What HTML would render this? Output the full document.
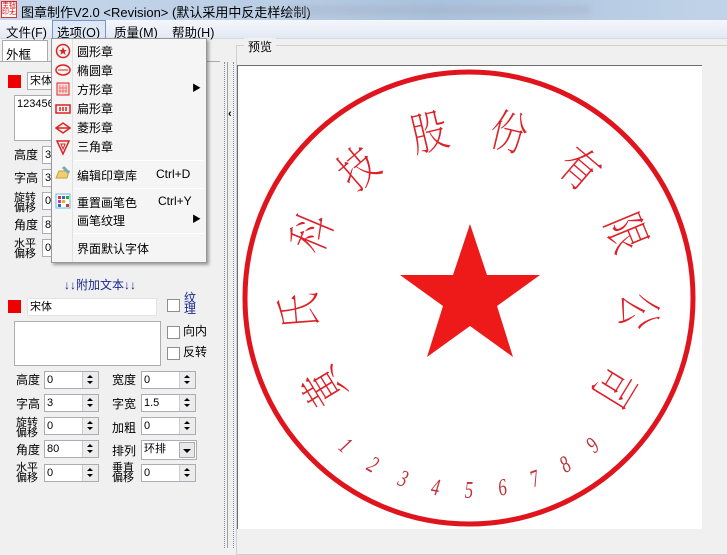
<!DOCTYPE html>
<html><head><meta charset="utf-8"><style>
*{margin:0;padding:0;box-sizing:border-box}
body{width:727px;height:548px;overflow:hidden;background:#f0f0f0;font-family:"Liberation Sans","Noto Sans CJK SC",sans-serif;font-size:12px;color:#000;position:relative}
.a{position:absolute}
.title{left:0;top:0;width:727px;height:20px;background:linear-gradient(90deg,#c5d6ea,#b9cde4 40%,#aac3de 60%,#c1d3e8);}
.menu{left:0;top:20px;width:727px;height:19px;background:linear-gradient(#f4f6fb,#e3e9f4);border-bottom:1px solid #d5dbe6}
.mi{top:22px;font-size:12.5px}
.inp{background:#fff;border:1px solid #abadb3;height:18px;font-size:11px;padding-left:2px;line-height:16px}
.spin{position:absolute;right:0;top:0;width:16px;height:16px;background:#ececec;border-left:1px solid #ccc}
.spin:before{content:"";position:absolute;left:4px;top:3px;border:3px solid transparent;border-bottom:3px solid #000;border-top:0}
.spin:after{content:"";position:absolute;left:4px;top:9px;border:3px solid transparent;border-top:3px solid #000;border-bottom:0}
.lb{font-size:12px;line-height:13px}
.lb2{font-size:11px;line-height:10px}
.cb{width:13px;height:13px;background:#fff;border:1px solid #8e8f8f}
.dd{left:51px;top:38px;width:156px;height:225px;background:#f5f5f5;border:1px solid #979797;box-shadow:2px 2px 3px rgba(0,0,0,.35)}
.dd div{position:absolute;font-size:12px}
.sep{height:1px;background:#d7d7d7;border-bottom:1px solid #fff;left:22px;width:130px}
</style></head><body>
<div class="a title"></div>
<div class="a" style="left:1px;top:1px;width:16px;height:17px;background:#fff;border:1px solid #d33;font-size:7px;line-height:7px;color:#d00;text-align:center">圭钮<br>印无</div>
<div class="a" style="left:21px;top:2px;font-size:13px">图章制作V2.0 &lt;Revision&gt; (默认采用中反走样绘制)</div>
<div class="a" style="left:290px;top:5px;width:300px;height:10px;background:rgba(160,170,190,.35);filter:blur(3px)"></div>
<div class="a menu"></div>
<div class="a mi" style="left:6px">文件(F)</div>
<div class="a" style="left:52px;top:20px;width:54px;height:19px;border:1px solid #7a95c0;background:#dde7f5"></div>
<div class="a mi" style="left:57px">选项(O)</div>
<div class="a mi" style="left:114px">质量(M)</div>
<div class="a mi" style="left:172px">帮助(H)</div>

<div class="a" style="left:2px;top:40px;width:46px;height:22px;border:1px solid #aaa;border-bottom:0;background:#fff"></div>
<div class="a" style="left:6px;top:44px;font-size:12.5px">外框</div>
<div class="a" style="left:0;top:61px;width:220px;height:1px;background:#aaa"></div>
<div class="a" style="left:8px;top:75px;width:13px;height:13px;background:#e00"></div>
<div class="a inp" style="left:27px;top:72px;width:130px">宋体</div>
<div class="a inp" style="left:14px;top:95px;width:150px;height:46px;font-size:11px">123456</div>
<div class="a lb" style="left:14px;top:149px">高度</div><div class="a inp" style="left:42px;top:146px;width:54px">3</div>
<div class="a lb" style="left:14px;top:172px">字高</div><div class="a inp" style="left:42px;top:169px;width:54px">3</div>
<div class="a lb2" style="left:14px;top:193px">旋转<br>偏移</div><div class="a inp" style="left:42px;top:192px;width:54px">0</div>
<div class="a lb" style="left:14px;top:219px">角度</div><div class="a inp" style="left:42px;top:216px;width:54px">8</div>
<div class="a lb2" style="left:14px;top:239px">水平<br>偏移</div><div class="a inp" style="left:42px;top:239px;width:54px">0</div>
<div class="a" style="left:64px;top:276px;font-size:12px;color:#1a2890">↓↓附加文本↓↓</div>
<div class="a" style="left:8px;top:300px;width:13px;height:13px;background:#e00"></div>
<div class="a inp" style="left:27px;top:298px;width:130px;border-color:#e3e3e3">宋体</div>
<div class="a cb" style="left:167px;top:299px"></div>
<div class="a" style="left:184px;top:293px;font-size:12px;line-height:11px;color:#1a2890">纹<br>理</div>
<div class="a inp" style="left:14px;top:321px;width:147px;height:45px"></div>
<div class="a cb" style="left:167px;top:326px"></div><div class="a lb" style="left:183px;top:325px">向内</div>
<div class="a cb" style="left:167px;top:347px"></div><div class="a lb" style="left:183px;top:346px">反转</div>

<div class="a lb" style="left:16px;top:374px">高度</div><div class="a inp" style="left:44px;top:371px;width:55px">0<span class="spin"></span></div>
<div class="a lb" style="left:112px;top:374px">宽度</div><div class="a inp" style="left:141px;top:371px;width:55px">0<span class="spin"></span></div>
<div class="a lb" style="left:16px;top:398px">字高</div><div class="a inp" style="left:44px;top:394px;width:55px">3<span class="spin"></span></div>
<div class="a lb" style="left:112px;top:398px">字宽</div><div class="a inp" style="left:141px;top:394px;width:55px">1.5<span class="spin"></span></div>
<div class="a lb2" style="left:16px;top:418px">旋转<br>偏移</div><div class="a inp" style="left:44px;top:417px;width:55px">0<span class="spin"></span></div>
<div class="a lb" style="left:112px;top:422px">加粗</div><div class="a inp" style="left:141px;top:417px;width:55px">0<span class="spin"></span></div>
<div class="a lb" style="left:16px;top:444px">角度</div><div class="a inp" style="left:44px;top:440px;width:55px">80<span class="spin"></span></div>
<div class="a lb" style="left:112px;top:445px">排列</div><div class="a inp" style="left:141px;top:440px;width:56px;height:20px">环排<span class="a" style="right:1px;top:1px;width:16px;height:16px;background:#e8e8e8;border:1px solid #aaa"></span><span class="a" style="right:5px;top:8px;border:4px solid transparent;border-top:4px solid #000;border-bottom:0"></span></div>
<div class="a lb2" style="left:16px;top:463px">水平<br>偏移</div><div class="a inp" style="left:44px;top:464px;width:55px">0<span class="spin"></span></div>
<div class="a lb2" style="left:112px;top:463px">垂直<br>偏移</div><div class="a inp" style="left:141px;top:464px;width:55px">0<span class="spin"></span></div>

<div class="a" style="left:224px;top:62px;width:1px;height:486px;border-left:1px dotted #7a8aa8"></div>
<div class="a" style="left:227px;top:62px;width:1px;height:486px;background:#a0a0a0"></div>
<div class="a" style="left:228px;top:108px;font-size:11px;font-weight:bold">‹</div>
<div class="a" style="left:233px;top:62px;width:1px;height:486px;border-left:1px dotted #7a8aa8"></div>

<div class="a" style="left:236px;top:45px;width:500px;height:510px;border:1px solid #d0d0d0"></div>
<div class="a" style="left:244px;top:38px;padding:0 4px;background:#f0f0f0;font-size:12px">预览</div>
<div class="a" style="left:237px;top:65px;width:465px;height:464px;background:#fff;border-top:1px solid #6d6d6d;border-left:1px solid #6d6d6d"></div>

<svg class="a" style="left:0;top:0" width="727" height="548">
<defs><clipPath id="c"><rect x="238" y="66" width="464" height="463"/></clipPath></defs>
<g clip-path="url(#c)">
<ellipse cx="469" cy="298" rx="224" ry="226" fill="none" stroke="#e0141c" stroke-width="5"/>
<polygon fill="#ee1a1a" points="470,224 487,275 540,275 497,306 513,357 470,326 427,357 443,306 400,275 453,275"/>
<g fill="#dd2028" font-family="'Noto Serif CJK SC',serif" font-size="46" font-weight="200" text-anchor="middle">
<text transform="translate(469,298) rotate(-121.5) translate(0,-170) scale(0.8,1)" y="16">黄</text>
<text transform="translate(469,298) rotate(-94.5) translate(0,-170) scale(0.8,1)" y="16">氏</text>
<text transform="translate(469,298) rotate(-67.5) translate(0,-170) scale(0.8,1)" y="16">科</text>
<text transform="translate(469,298) rotate(-40.5) translate(0,-170) scale(0.8,1)" y="16">技</text>
<text transform="translate(469,298) rotate(-13.5) translate(0,-170) scale(0.8,1)" y="16">股</text>
<text transform="translate(469,298) rotate(13.5) translate(0,-170) scale(0.8,1)" y="16">份</text>
<text transform="translate(469,298) rotate(40.5) translate(0,-170) scale(0.8,1)" y="16">有</text>
<text transform="translate(469,298) rotate(67.5) translate(0,-170) scale(0.8,1)" y="16">限</text>
<text transform="translate(469,298) rotate(94.5) translate(0,-170) scale(0.8,1)" y="16">公</text>
<text transform="translate(469,298) rotate(121.5) translate(0,-170) scale(0.8,1)" y="16">司</text>
</g>
<g fill="#c0303a" font-family="'Liberation Serif',serif" font-style="italic" font-size="24" text-anchor="middle">
<text transform="translate(469,298) rotate(40) translate(0,200) scale(0.7,1)">1</text>
<text transform="translate(469,298) rotate(30) translate(0,200) scale(0.7,1)">2</text>
<text transform="translate(469,298) rotate(20) translate(0,200) scale(0.7,1)">3</text>
<text transform="translate(469,298) rotate(10) translate(0,200) scale(0.7,1)">4</text>
<text transform="translate(469,298) rotate(0) translate(0,200) scale(0.7,1)">5</text>
<text transform="translate(469,298) rotate(-10) translate(0,200) scale(0.7,1)">6</text>
<text transform="translate(469,298) rotate(-20) translate(0,200) scale(0.7,1)">7</text>
<text transform="translate(469,298) rotate(-30) translate(0,200) scale(0.7,1)">8</text>
<text transform="translate(469,298) rotate(-40) translate(0,200) scale(0.7,1)">9</text>
</g>
</g>
</svg>

<div class="a dd">
<div style="left:20px;top:0;width:1px;height:223px;background:#e2e2e2"></div>
<svg style="position:absolute;left:3px;top:4px" width="16" height="120">
<circle cx="8" cy="8" r="6.5" fill="none" stroke="#d22" stroke-width="1.5"/><polygon fill="#d22" points="8,4 9.2,7 12,7 9.7,8.8 10.6,12 8,10 5.4,12 6.3,8.8 4,7 6.8,7"/>
<ellipse cx="8" cy="27" rx="7" ry="5" fill="none" stroke="#d22" stroke-width="1.5"/><line x1="3" y1="27" x2="13" y2="27" stroke="#d22"/>
<rect x="2" y="40" width="12" height="12" fill="#fdd" stroke="#d22"/><path d="M5 42v8M8 42v8M11 42v8M4 45h8M4 48h8" stroke="#e55" stroke-width=".7"/>
<rect x="1" y="62" width="14" height="8" fill="none" stroke="#d22" stroke-width="1.5"/><path d="M5 64v4M8 64v4M11 64v4" stroke="#d22" stroke-width="1.5"/>
<path d="M1 85 L8 80 L15 85 L8 90Z" fill="none" stroke="#d22" stroke-width="1.5"/><line x1="2" y1="85" x2="14" y2="85" stroke="#d22" stroke-width="1.5"/>
<path d="M2 98 L14 98 L8 111Z" fill="none" stroke="#d22" stroke-width="1.5"/><path d="M6 101 L10 101 L8 106Z" fill="none" stroke="#d22"/>
</svg>
<div style="left:25px;top:4px">圆形章</div>
<div style="left:25px;top:23px">椭圆章</div>
<div style="left:25px;top:42px">方形章</div><div style="left:140px;top:42px;font-size:9px">▶</div>
<div style="left:25px;top:61px">扁形章</div>
<div style="left:25px;top:80px">菱形章</div>
<div style="left:25px;top:99px">三角章</div>
<div class="sep" style="top:121px"></div>
<svg style="position:absolute;left:3px;top:126px" width="16" height="16"><path d="M1 13 L4 6 L14 6 L12 13Z" fill="#f0d070" stroke="#c9a030"/><path d="M8 2 L14 8" stroke="#7ab" stroke-width="3"/></svg>
<div style="left:25px;top:128px">编辑印章库</div><div style="left:104px;top:128px">Ctrl+D</div>
<div class="sep" style="top:149px"></div>
<svg style="position:absolute;left:3px;top:154px" width="16" height="16"><rect x="1" y="1" width="14" height="14" fill="#fff" stroke="#6bd"/><rect x="3" y="3" width="3" height="3" fill="#d33"/><rect x="7" y="3" width="3" height="3" fill="#36c"/><rect x="11" y="3" width="3" height="3" fill="#3a3"/><rect x="3" y="7" width="3" height="3" fill="#c3c"/><rect x="7" y="7" width="3" height="3" fill="#fa0"/><rect x="3" y="11" width="3" height="3" fill="#36c"/><rect x="11" y="11" width="3" height="3" fill="#d33"/></svg>
<div style="left:25px;top:155px">重置画笔色</div><div style="left:106px;top:155px">Ctrl+Y</div>
<div style="left:25px;top:173px">画笔纹理</div><div style="left:140px;top:173px;font-size:9px">▶</div>
<div class="sep" style="top:194px"></div>
<div style="left:25px;top:201px">界面默认字体</div>
</div>
</body></html>
